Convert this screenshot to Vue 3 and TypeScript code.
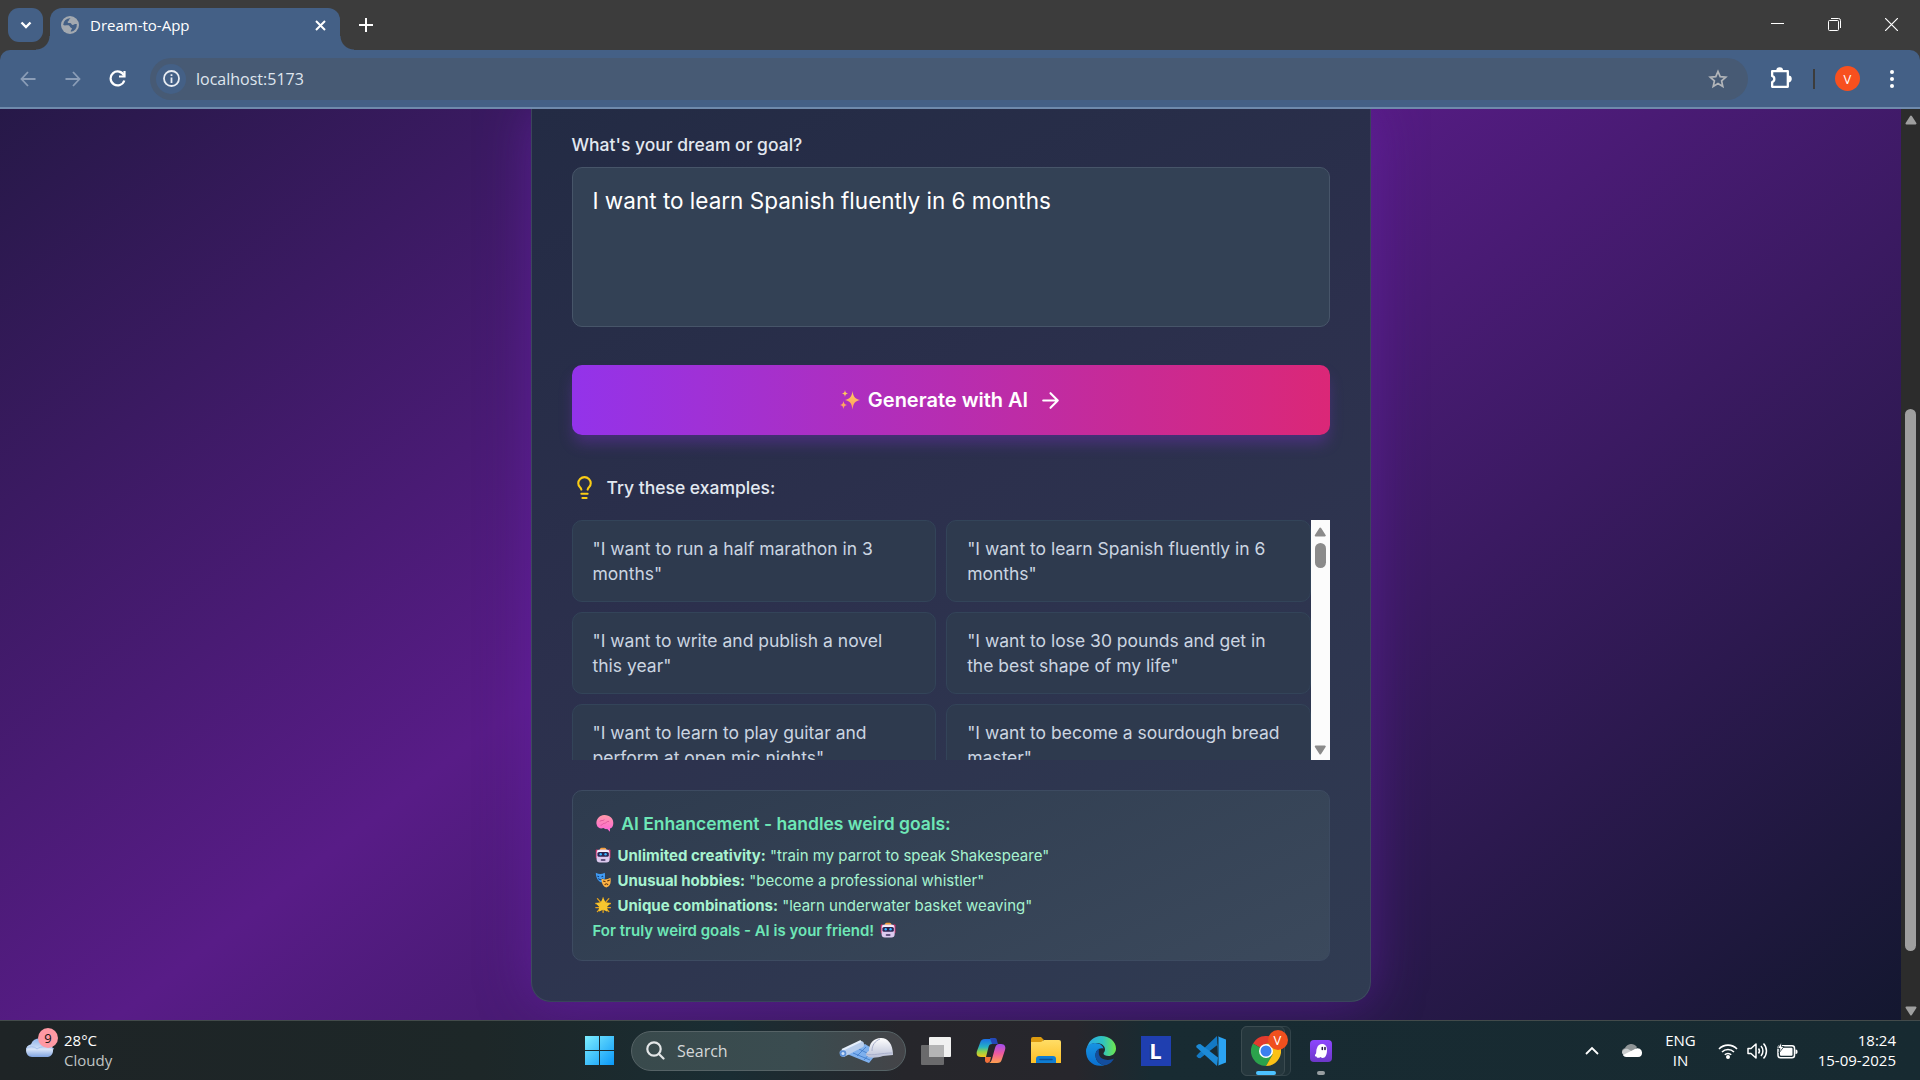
<script setup lang="ts">
import { ref } from 'vue'

interface Highlight {
  icon: 'robot' | 'masks' | 'star'
  label: string
  quote: string
}

const address = ref('localhost:5173')
const search = ref('')
const goal = ref('I want to learn Spanish fluently in 6 months')

const examples: string[] = [
  'I want to run a half marathon in 3 months',
  'I want to learn Spanish fluently in 6 months',
  'I want to write and publish a novel this year',
  'I want to lose 30 pounds and get in the best shape of my life',
  'I want to learn to play guitar and perform at open mic nights',
  'I want to become a sourdough bread master',
]

const highlights: Highlight[] = [
  { icon: 'robot', label: 'Unlimited creativity:', quote: '"train my parrot to speak Shakespeare"' },
  { icon: 'masks', label: 'Unusual hobbies:', quote: '"become a professional whistler"' },
  { icon: 'star', label: 'Unique combinations:', quote: '"learn underwater basket weaving"' },
]

function pick(example: string): void {
  goal.value = example
}
</script>

<template>
  <div class="desktop">
    <svg class="defs" width="0" height="0" aria-hidden="true">
      <defs>
        <linearGradient id="gSpark" x1="0" y1="0" x2="0" y2="1"><stop offset="0" stop-color="#ffd35c" /><stop offset="1" stop-color="#ff9a62" /></linearGradient>
        <linearGradient id="gBrain" x1="0" y1="0" x2="0" y2="1"><stop offset="0" stop-color="#ff9aa8" /><stop offset="1" stop-color="#ff62d8" /></linearGradient>
        <linearGradient id="gWin" x1="0" y1="0" x2="1" y2="1"><stop offset="0" stop-color="#7deeff" /><stop offset="1" stop-color="#0a98f8" /></linearGradient>
        <linearGradient id="gCopA" x1="0" y1="0" x2="0" y2="1"><stop offset="0" stop-color="#1a6fe8" /><stop offset=".45" stop-color="#27b2c4" /><stop offset=".7" stop-color="#8fd24a" /><stop offset="1" stop-color="#f6c51c" /></linearGradient>
        <linearGradient id="gCopB" x1="0" y1="0" x2="0" y2="1"><stop offset="0" stop-color="#a04df0" /><stop offset=".5" stop-color="#ee5a9e" /><stop offset="1" stop-color="#ffa04e" /></linearGradient>
        <linearGradient id="gFold" x1="0" y1="0" x2="0" y2="1"><stop offset="0" stop-color="#ffdd66" /><stop offset="1" stop-color="#fdbf25" /></linearGradient>
        <linearGradient id="gEdge" x1="0" y1="0" x2="1" y2="0"><stop offset="0" stop-color="#2aa8e8" /><stop offset=".55" stop-color="#2fc3c0" /><stop offset="1" stop-color="#6fe84a" /></linearGradient>
        <linearGradient id="gEdgeB" x1="0" y1="0" x2="0" y2="1"><stop offset="0" stop-color="#1794e2" /><stop offset="1" stop-color="#0a6fd0" /></linearGradient>
        <linearGradient id="gCloud" x1="0" y1="0" x2="0" y2="1"><stop offset="0" stop-color="#8fb4ea" /><stop offset=".6" stop-color="#d6e3f8" /><stop offset="1" stop-color="#7fa3e0" /></linearGradient>
        <linearGradient id="gGhost" x1="0" y1="0" x2="0" y2="1"><stop offset="0" stop-color="#8d46ff" /><stop offset="1" stop-color="#6c38c8" /></linearGradient>
        <linearGradient id="gHelmet" x1="0" y1="0" x2="0" y2="1"><stop offset="0" stop-color="#ffffff" /><stop offset="1" stop-color="#b9bfd6" /></linearGradient>
        <symbol id="robot" viewBox="0 0 20 20">
          <rect x="1" y="3" width="3" height="11" rx="1" fill="#d6336c" /><rect x="16" y="3" width="3" height="11" rx="1" fill="#d6336c" />
          <rect x="6" y="1" width="8" height="4" rx="2" fill="#f59f3a" />
          <rect x="2" y="3" width="16" height="16" rx="4" fill="#dcc9ee" /><rect x="3" y="4" width="14" height="3" rx="1" fill="#f7effc" />
          <rect x="3" y="6" width="14" height="6" rx="2" fill="#2b2450" /><circle cx="7" cy="9" r="1.5" fill="#35b6ff" /><circle cx="13" cy="9" r="1.5" fill="#35b6ff" />
          <rect x="7" y="15" width="6" height="2" rx="1" fill="#3a2d5c" />
        </symbol>
        <symbol id="masks" viewBox="0 0 20 20">
          <path d="M1 1c4 2 7 2 11 0 1 6 0 11-4 12C4 12 1 7 1 1z" fill="#3f9bf5" /><path d="M3 5l2 1M8 6l2-1M4 8c2 2 4 2 6 0" stroke="#123a72" stroke-width="1.3" fill="none" />
          <path d="M8 8c4 2 7 1 11-1 1 6 0 11-5 12-4-1-6-5-6-11z" fill="#fdb244" /><path d="M10 11l3 1M15 11l3-1M12 16c1-2 3-2 4 0" stroke="#5f3512" stroke-width="1.4" fill="none" />
        </symbol>
        <symbol id="star" viewBox="0 0 20 20">
          <path d="M10 1v18M1 8h18M3 2l14 16M17 2L3 18M1 13h18" stroke="#e5a21c" stroke-width="1.6" stroke-linecap="round" />
          <path d="M10 3l2.300 4.500 5 .8-3.600 3.500.8 5-4.500-2.300-4.500 2.300.8-5L2.700 8.300l5-.8z" fill="#f7c62f" stroke="#f7c62f" stroke-width="2" stroke-linejoin="round" />
        </symbol>
      </defs>
    </svg>

    <header class="tabs">
      <button class="tab-search" aria-label="Search tabs">
        <svg width="14" height="14" viewBox="0 0 14 14" fill="none" stroke="#fff" stroke-width="2.400"><path d="M2.500 4.500L7 9l4.500-4.500" /></svg>
      </button>
      <div class="tab">
        <svg width="18" height="18" viewBox="0 0 18 18"><circle cx="9" cy="9" r="9" fill="#a3a9b0" /><path d="M9.500 2.200c-1 1.300-1.700 1-1.700 2.300 0 .9-1.200.6-1.200 1.600 0 1 .9 1 2.400 1 1.600 0 1.300 2 2.800 2 1.400 0 1.200-1 2.200-1h1.800a6.800 6.800 0 0 1-6 7.600c0-1.600.2-1.600 1-2.500.6-.8-.2-1.300-1.200-1.800-.9-.4-.7-1.800-2.100-2.100-1.500-.3-2.500-.1-3.500.2L2.200 9a6.800 6.800 0 0 1 7.300-6.800z" fill="#446086" /></svg>
        <span class="tab-title">Dream-to-App</span>
        <button class="ghost" aria-label="Close tab">
          <svg width="11" height="11" viewBox="0 0 11 11" stroke="#fff" stroke-width="2"><path d="M1 1l9 9M10 1l-9 9" /></svg>
        </button>
      </div>
      <button class="new-tab" aria-label="New tab">
        <svg width="14" height="14" viewBox="0 0 14 14" stroke="#fff" stroke-width="2"><path d="M7 0v14M0 7h14" /></svg>
      </button>
      <div class="window-buttons">
        <button aria-label="Minimize"><svg width="13" height="13" viewBox="0 0 13 13" stroke="#fff"><path d="M0 5.500h13" /></svg></button>
        <button aria-label="Restore"><svg width="13" height="13" viewBox="0 0 13 13" fill="none" stroke="#fff"><rect x=".5" y="2.500" width="10" height="10" rx="1" /><path d="M3 .5h7.500a2 2 0 0 1 2 2V10" /></svg></button>
        <button aria-label="Close"><svg width="13" height="13" viewBox="0 0 13 13" stroke="#fff" stroke-width="1.200"><path d="M0 0l13 13M13 0L0 13" /></svg></button>
      </div>
    </header>

    <div class="chrome-back">
      <nav class="toolbar" aria-label="Browser toolbar">
        <button class="tool" aria-label="Back"><svg width="16" height="16" viewBox="0 0 16 16" fill="none" stroke="#8b9db7" stroke-width="1.800"><path d="M15.500 8H1.500M8 1L1.500 8 8 15" /></svg></button>
        <button class="tool" aria-label="Forward"><svg width="16" height="16" viewBox="0 0 16 16" fill="none" stroke="#8b9db7" stroke-width="1.800"><path d="M.5 8h14M8 1l6.500 7L8 15" /></svg></button>
        <button class="tool" aria-label="Reload"><svg width="17" height="17" viewBox="0 0 17 17" fill="none" stroke="#fff" stroke-width="2.200"><path d="M15 5.500A7 7 0 1 0 15.300 10.500" /><path d="M15.500 1v5.500H10" /></svg></button>
        <div class="omnibox">
          <button class="site-info" aria-label="Site information"><svg width="17" height="17" viewBox="0 0 17 17" fill="none" stroke="#e8ecf2" stroke-width="1.800"><circle cx="8.500" cy="8.500" r="7.500" /><path d="M8.500 7.500V13M8.500 4.200V6" /></svg></button>
          <input v-model="address" class="address" type="text" aria-label="Address" />
          <button class="ghost" aria-label="Bookmark"><svg width="20" height="20" viewBox="0 0 20 20" fill="none" stroke="#b2b5b9" stroke-width="1.700"><path d="M10 2.500l2.200 5.200 5.600.5-4.200 3.700 1.200 5.500L10 14.500l-4.800 2.900 1.200-5.500L2.200 8.200l5.600-.5z" /></svg></button>
        </div>
        <button class="tool ext" aria-label="Extensions"><svg width="23" height="23" viewBox="0 0 22 22" fill="none" stroke="#fff" stroke-width="2.200" stroke-linejoin="round"><path d="M3 4h15v15H3v-4.500a3.200 3.200 0 0 0 0-6z" /><path d="M8 3.500a2.200 2.200 0 0 1 4.400 0zM18.500 9.300a2.200 2.200 0 0 1 0 4.400z" fill="#fff" /></svg></button>
        <span class="divider"></span>
        <button class="profile" aria-label="Profile">V</button>
        <button class="tool menu" aria-label="Menu"><svg width="6" height="20" viewBox="0 0 6 20" fill="#fff"><circle cx="3" cy="3" r="2" /><circle cx="3" cy="10" r="2" /><circle cx="3" cy="17" r="2" /></svg></button>
      </nav>
    </div>

    <div class="viewport">
      <main class="page">
        <section class="card">
          <label class="label" for="goal">What's your dream or goal?</label>
          <textarea id="goal" v-model="goal" class="goal" spellcheck="false"></textarea>

          <button class="generate">
            <svg class="emoji" width="16" height="16" viewBox="0 0 20 20" fill="url(#gSpark)" aria-hidden="true"><path d="M12.500 1c.8 5.500 2 7.500 7.500 9-5.500 1.500-6.700 3.500-7.500 9.500-.8-6-2-8-7.500-9.500 5.500-1.500 6.700-3.500 7.500-9zM5 0c.4 2.200.8 3 3 3.500C5.800 4 5.400 4.800 5 7c-.4-2.200-.8-3-3-3.500C4.200 3 4.600 2.200 5 0zM3.500 11c.4 2.400 1 3.400 3.500 4-2.500.6-3.100 1.600-3.500 4-.4-2.400-1-3.400-3.500-4 2.500-.6 3.100-1.600 3.500-4z" /></svg>
            <span>Generate with AI</span>
            <svg class="arrow" width="20" height="20" viewBox="0 0 24 24" fill="none" stroke="currentColor" stroke-width="2" stroke-linecap="round" stroke-linejoin="round" aria-hidden="true"><path d="M5 12h14M12 5l7 7-7 7" /></svg>
          </button>

          <h3 class="try">
            <svg width="20" height="20" viewBox="0 0 24 24" fill="none" stroke="#facc15" stroke-width="2" stroke-linecap="round" stroke-linejoin="round" aria-hidden="true"><path d="M15 14c.2-1 .7-1.700 1.500-2.500 1-.9 1.500-2.200 1.500-3.500A6 6 0 0 0 6 8c0 1 .2 2.200 1.500 3.500.7.7 1.300 1.500 1.500 2.500M9 18h6M10 22h4" /></svg>
            <span>Try these examples:</span>
          </h3>

          <div class="scroller">
            <div class="examples">
              <button v-for="example in examples" :key="example" class="example" @click="pick(example)">"{{ example }}"</button>
            </div>
            <div class="bar bar-light" aria-hidden="true">
              <svg width="10" height="8" viewBox="0 0 12 10"><path d="M6 1.500L10.500 8.500h-9z" fill="#8b8b8b" stroke="#8b8b8b" stroke-width="2" stroke-linejoin="round" /></svg>
              <div class="track"><i class="thumb thumb-small"></i></div>
              <svg width="10" height="8" viewBox="0 0 12 10"><path d="M6 8.500L10.500 1.500h-9z" fill="#8b8b8b" stroke="#8b8b8b" stroke-width="2" stroke-linejoin="round" /></svg>
            </div>
          </div>

          <aside class="info">
            <h4 class="info-title">
              <svg class="emoji" width="15" height="15" viewBox="0 0 20 20" aria-hidden="true"><path d="M2 12C0 7 4 1 10 1s10 4 9.500 9.500c-.2 3-1.500 4.500-3.500 5V19l-3-3c-2 .5-3-.5-4-1-3 1-6 0-7-3z" fill="url(#gBrain)" /><path d="M5 8c2-2 3 0 5-2M10 10c2 0 3-3 5-2M6 12c2 0 2-2 4-2" stroke="#e0569d" stroke-width="1" fill="none" /></svg>
              <span>AI Enhancement - handles weird goals:</span>
            </h4>
            <p v-for="item in highlights" :key="item.label" class="info-line">
              <svg class="emoji" width="13" height="13" aria-hidden="true"><use :href="'#' + item.icon" /></svg>
              <span><strong>{{ item.label }}</strong> {{ item.quote }}</span>
            </p>
            <p class="info-line closing">
              <span>For truly weird goals - AI is your friend!</span>
              <svg width="13" height="13" aria-hidden="true"><use href="#robot" /></svg>
            </p>
          </aside>
        </section>
      </main>
      <div class="bar bar-dark" aria-hidden="true">
        <svg width="12" height="10" viewBox="0 0 12 10"><path d="M6 1.500L10.500 8.500h-9z" fill="#9f9f9f" stroke="#9f9f9f" stroke-width="2" stroke-linejoin="round" /></svg>
        <div class="track"><i class="before"></i><i class="thumb thumb-large"></i><i class="after"></i></div>
        <svg width="12" height="10" viewBox="0 0 12 10"><path d="M6 8.500L10.500 1.500h-9z" fill="#9f9f9f" stroke="#9f9f9f" stroke-width="2" stroke-linejoin="round" /></svg>
      </div>
    </div>

    <footer class="taskbar">
      <button class="weather" aria-label="Weather">
        <span class="weather-icon">
          <svg width="30" height="22" viewBox="0 0 30 22"><path d="M7 21a6.500 6.500 0 0 1-1-12.800A9.500 9.500 0 0 1 23.500 8 6.800 6.800 0 0 1 23 21z" fill="url(#gCloud)" /><path d="M1 13c3-3 8-3 11 0 4-3 10-3 17 0" stroke="#a7c2ee" fill="none" /></svg>
          <b class="badge">9</b>
        </span>
        <span class="weather-text"><span>28°C</span><span class="dim">Cloudy</span></span>
      </button>

      <div class="apps">
        <button class="app" aria-label="Start"><svg width="30" height="30" viewBox="0 0 30 30" fill="url(#gWin)"><path d="M0 0h14v14H0zM15 0h14v14H15zM0 15h14v14H0zM15 15h14v14H15z" /></svg></button>
        <div class="search">
          <svg width="19" height="19" viewBox="0 0 19 19" fill="none" stroke="#e3e6e7" stroke-width="2.200" stroke-linecap="round"><circle cx="8" cy="8" r="6.700" /><path d="M13 13l4.500 4.500" /></svg>
          <input v-model="search" type="search" placeholder="Search" aria-label="Search" />
          <svg width="54" height="26" viewBox="0 0 54 26"><path d="M8 16L26 6l13 8-9 11z" fill="#7eb0ee" /><path d="M14 15l17 7M20 11l14 7M27 9l-9 9M34 12l-9 10" stroke="#3c78c8" stroke-width=".8" /><path d="M1 13L22 3c3 0 4 4 2 6L5 19c-3 0-5-3-4-6z" fill="#b7cdec" /><path d="M3 12L22 3" stroke="#e4eefb" stroke-width="2" /><circle cx="4" cy="15.500" r="3.300" fill="#5b8fd6" /><circle cx="4" cy="15.500" r="1.500" fill="#cfe0f7" /><path d="M30 13C30 5 35 0 42 0s12 6 12 17l-10 1c-6 2-14 3-17-1 0-2 1-3 3-4z" fill="url(#gHelmet)" /><path d="M33 13c0-6 3-10 8-12M27 16c6 2 16-1 26-1" stroke="#a9b0cc" fill="none" /></svg>
        </div>
        <button class="app" aria-label="Task view"><svg width="30" height="28" viewBox="0 0 30 28"><rect y="8" width="23" height="20" rx="1" fill="#6a6a6c" /><rect x="8" width="22" height="20" rx="1" fill="#f1f1f1" /><path d="M8 8h15v12H8z" fill="#b4b4b5" /></svg></button>
        <button class="app" aria-label="Copilot"><svg width="30" height="28" viewBox="0 0 30 28"><path d="M9 2h9c2 0 2 2 3 5h-5c-2 0-3 1-3.500 3L10 20H5c-4 0-5-3-4-6L4 6c1-3 2-4 5-4z" fill="url(#gCopA)" /><path d="M14 1h5c2 0 2 3 3 6h-6z" fill="#2448b8" /><path d="M21 26h-9c2 0 3-1 4-4l3-11c1-3 2-4 4-4h2c4 0 5 3 4 6l-3 9c-1 3-2 4-5 4z" fill="url(#gCopB)" /><path d="M9 20h6l-1 4c-1 2-4 3-5 0z" fill="#f2703a" /></svg></button>
        <button class="app" aria-label="File Explorer"><svg width="30" height="27" viewBox="0 0 30 27"><path d="M0 2a2 2 0 0 1 2-2h8l3 3h-1v5H0z" fill="#dc9b10" /><path d="M0 5h10l3-2h15a2 2 0 0 1 2 2v21H0z" fill="url(#gFold)" /><path d="M5 26v-4a3 3 0 0 1 3-3h14a3 3 0 0 1 3 3v4z" fill="#0f7dd3" /><path d="M9 22.500h12" stroke="#0b4f96" stroke-width="1.500" stroke-linecap="round" /></svg></button>
        <button class="app" aria-label="Edge"><svg width="30" height="30" viewBox="0 0 30 30"><path d="M1 12A14.500 14.500 0 0 1 15 0c9 0 15 6 15 12.500 0 5-4 7.500-7.500 7.500-3 0-5-1-5-2.500 0-1 1.500-1.500 1.500-4 0-4-4-6.500-8.500-6.500C6 7 2.500 9 1 12z" fill="url(#gEdge)" /><path d="M0 15c0-5 4-8 9-8s8 3 8.500 5.500C13 11 9 15 9.500 20c.4 5 4 8.500 9 9.200C8 32 0 25 0 15z" fill="url(#gEdgeB)" /><path d="M13 12.500c-3 2-4 5-3.500 8 .8 5 6 9.500 11 8.500 3-1 6-3 7.500-6.500-6 3-14 1-15-4-.4-2 0-4.500 0-6z" fill="#134e9e" /></svg></button>
        <button class="app" aria-label="L"><span class="letter">L</span></button>
        <button class="app" aria-label="Visual Studio Code"><svg width="30" height="30" viewBox="0 0 30 30"><path d="M21 0L2.500 17.500.3 20l2 2 2 .2L22 8.500V21z" fill="#1379c4" /><path d="M2.300 8.200L.3 9.700v1.500L21 30l1-8.500L4.300 8z" fill="#1c8ad6" /><path d="M21 0l9 3.500v23L21 30c1 0 1.500-1 1.500-2V2c0-1-.5-2-1.500-2z" fill="#2ba3f2" /></svg></button>
        <button class="app" aria-label="Chrome">
          <span class="tile stacked">
            <svg width="30" height="30" viewBox="0 0 30 30"><path d="M15 15L2 7.500A15 15 0 0 1 28 7.500H15z" fill="#e33b2e" /><path d="M15 15l6.500 3.700L15 30A15 15 0 0 1 2 7.500z" fill="#2ba24c" /><path d="M15 7.500h13A15 15 0 0 1 15 30l6.500-11.300z" fill="#fbc116" /><circle cx="15" cy="15" r="7" fill="#fff" /><circle cx="15" cy="15" r="5.500" fill="#3b7ff0" /></svg>
            <b class="badge profile-badge">V</b>
            <i class="active-line"></i>
          </span>
        </button>
        <button class="app" aria-label="Kiro">
          <span class="tile plain">
            <svg width="22" height="22" viewBox="0 0 22 22"><rect width="22" height="22" rx="4" fill="url(#gGhost)" /><path d="M6.500 16.500C4.500 17 4.500 15 6 13.500 6.500 12 6 10 7 8c1-3 2.800-4 5-4 3.500 0 5 2.500 5 6 0 4.500-1.500 8-4.500 8-1.200 0-1.500-.8-2-1-1.500 1.200-4 1.200-4-.5z" fill="#fff" /><path d="M12.300 7.500v2M15 7.500v2" stroke="#2a1a4a" stroke-width="1.600" stroke-linecap="round" /></svg>
            <i class="idle-line"></i>
          </span>
        </button>
      </div>

      <div class="tray">
        <button aria-label="Hidden icons"><svg width="14" height="9" viewBox="0 0 14 9" fill="none" stroke="#fff" stroke-width="1.800"><path d="M1 8l6-6 6 6" /></svg></button>
        <button class="onedrive" aria-label="OneDrive"><svg width="20" height="13" viewBox="0 0 20 13"><path d="M0 9a4 4 0 0 1 3-5 7 7 0 0 1 12-1l-5 7z" fill="#8f9496" /><path d="M0 9c0-3 3-5 6-4l8 5-12 2z" fill="#c9cccd" /><path d="M4 13a4 4 0 0 1-3-2l12-6a4.500 4.500 0 0 1 7 4c0 2-1 4-4 4z" fill="#fff" /></svg></button>
        <button class="lang"><span>ENG</span><span>IN</span></button>
        <button class="quick" aria-label="Network, volume and battery">
          <svg width="20" height="16" viewBox="0 0 20 16" fill="none" stroke="#fff" stroke-width="1.600"><path d="M1 6a12.500 12.500 0 0 1 18 0M4 9a8.500 8.500 0 0 1 12 0M6.800 11.800a4.500 4.500 0 0 1 6.400 0" /><circle cx="10" cy="14" r="1.200" fill="#fff" /></svg>
          <svg width="21" height="18" viewBox="0 0 21 18" fill="none" stroke="#fff" stroke-width="1.500"><path d="M1 6.500h3L9 2v14l-5-4.500H1z" stroke-linejoin="round" /><path d="M11.500 6.500a4 4 0 0 1 0 5M14 4a7.500 7.500 0 0 1 0 10M16.500 1.500a11 11 0 0 1 0 15" /></svg>
          <svg width="21" height="17" viewBox="0 0 21 17"><rect x="1" y="3.700" width="16.500" height="12" rx="2.500" fill="none" stroke="#fff" stroke-width="1.500" /><rect x="3" y="5.700" width="12.500" height="8" rx="1" fill="#fff" /><path d="M18.500 7.500v4.500c2 0 2-1 2-2.200s0-2.300-2-2.300z" fill="#fff" /><path d="M4.500 0L.5 6.500H3L2 11l5-6.500H4.500z" fill="#fff" stroke="#182b31" stroke-width=".8" /></svg>
        </button>
        <button class="clock"><span>18:24</span><span>15-09-2025</span></button>
      </div>
    </footer>
  </div>
</template>

<style scoped>
* { box-sizing: border-box; }
button { border: 0; padding: 0; margin: 0; background: none; color: inherit; font: inherit; }
svg { display: block; flex: none; }
h3, h4, p { margin: 0; }
.defs { position: absolute; }

.desktop {
  display: flex;
  flex-direction: column;
  height: 100vh;
  overflow: hidden;
  font-family: "Open Sans", "Noto Sans", sans-serif;
  font-size: 15px;
  color: #fff;
}

.tabs { flex: none; display: flex; height: 50px; padding-left: 8px; background: #3c3c3c; }
.tab-search { display: grid; place-items: center; width: 35px; height: 34px; margin: 8px 7px 0 0; border-radius: 11px; background: #446086; }
.tab { position: relative; display: flex; align-items: center; gap: 11px; width: 290px; height: 42px; margin-top: 8px; padding: 0 14px 8px 11px; border-radius: 12px 12px 0 0; background: #446086; }
.tab::before, .tab::after { content: ""; position: absolute; bottom: 0; width: 14px; height: 14px; }
.tab::before { right: 100%; background: radial-gradient(circle at 0 0, transparent 13px, #446086 14px); }
.tab::after { left: 100%; background: radial-gradient(circle at 100% 0, transparent 13px, #446086 14px); }
.tab-title { flex: 1; }
.new-tab { display: grid; place-items: center; width: 52px; height: 50px; }
.window-buttons { display: flex; margin-left: auto; }
.window-buttons button { display: grid; place-items: center; width: 57px; height: 48px; }

.chrome-back { flex: none; background: #3c3c3c; }
.toolbar { display: flex; align-items: center; height: 59px; padding: 0 6px 0 5px; border-bottom: 2px solid #6f8aac; border-radius: 10px 10px 0 0; background: #446086; }
.tool { display: grid; place-items: center; width: 45px; height: 42px; }
.omnibox { flex: 1; display: flex; align-items: center; height: 42px; margin-left: 10px; padding: 0 20px 0 6px; border-radius: 21px; background: #475a74; }
.site-info { display: grid; place-items: center; width: 30px; height: 30px; border-radius: 15px; background: #446086; }
.address { flex: 1; min-width: 0; height: 30px; margin-left: 10px; padding: 0; border: 0; outline: 0; background: none; color: #dfe5ee; font: 16px "Open Sans", "Noto Sans", sans-serif; }
.ext { margin-left: 10px; }
.divider { width: 2px; height: 20px; margin: 0 20px 0 10px; background: #3c3c3c; }
.profile { width: 25px; height: 25px; border-radius: 13px; background: #f8501e; font-size: 13px; }
.menu { margin-left: 9px; }

.viewport { flex: 1; min-height: 0; display: flex; overflow: hidden; }
.page {
  flex: 1;
  min-width: 0;
  overflow: hidden;
  background: linear-gradient(to bottom right, #0f172a, #581c87, #0f172a) 0 -472px / 100% 1470px;
  font-family: Inter, sans-serif;
}
.card {
  zoom: 1.25;
  max-width: 672px;
  margin: 0 auto;
  padding: 18px 32px 32px;
  border: 1px solid rgba(71, 85, 105, .6);
  border-top: 0;
  border-radius: 0 0 16px 16px;
  background: linear-gradient(155deg, #232b44, #2c304d 45%, #303c52);
  box-shadow: 0 0 40px rgba(109, 34, 180, .5);
  font-size: 14px;
  line-height: 20px;
}
.label { display: block; margin-bottom: 8px; color: #e2e8f0; font-weight: 500; }
.goal { display: block; width: 100%; height: 128px; padding: 12px 16px; border: 1px solid #475569; border-radius: 8px; outline: 0; resize: none; background: #334155; color: #fff; font: 18px/28px Inter, sans-serif; }
.generate { display: flex; align-items: center; justify-content: center; gap: 6px; width: 100%; height: 56px; margin: 31px 0 32px; border-radius: 8px; background: linear-gradient(to right, #9333ea, #db2777); box-shadow: 0 8px 12px -2px rgba(147, 51, 234, .3); font-size: 16px; font-weight: 600; }
.emoji { margin-left: 2px; }
.arrow { margin-left: 2px; }
.try { display: flex; align-items: center; gap: 8px; margin-bottom: 16px; color: #e2e8f0; font-size: 14px; font-weight: 500; }
.scroller { display: flex; height: 192px; }
.examples { flex: 1; display: grid; grid-template-columns: 1fr 1fr; gap: 8px; align-content: start; overflow: hidden; }
.example { padding: 12px 16px; border: 1px solid #334459; border-radius: 8px; background: #2e3a4e; color: #cbd5e1; text-align: left; }
.info { margin-top: 24px; padding: 16px 16px 14px; border: 1px solid #3d4b61; border-radius: 8px; background: linear-gradient(155deg, #2e3b4e, #3b495c); }
.info-title { display: flex; align-items: center; gap: 6px; margin-bottom: 5px; color: #6ee7b7; font-size: 14px; font-weight: 600; }
.info-line { display: flex; align-items: center; gap: 5px; color: #a7f3d0; font-size: 12px; }
.closing { color: #6ee7b7; font-weight: 600; }

.bar { flex: none; display: flex; flex-direction: column; align-items: center; }
.track { flex: 1; display: flex; flex-direction: column; align-items: center; width: 100%; }
.thumb { border-radius: 6px; }
.bar-light { width: 15px; padding: 5px 0 4px; background: #fcfcfc; }
.bar-light .track { padding-top: 5px; }
.thumb-small { width: 9px; height: 20px; background: #8b8b8b; }
.bar-dark { width: 19px; padding: 6px 0 4px; background: #2c2c2c; }
.bar-dark .track { margin: 8px 0 6px; }
.thumb-large { flex: 542; width: 11px; background: #9f9f9f; }
.before { flex: 276; }
.after { flex: 49; }

.taskbar {
  flex: none;
  display: grid;
  grid-template-columns: 1fr auto 1fr;
  height: 60px;
  border-top: 1px solid #434b4b;
  background: linear-gradient(to right, #1e2426, #1d2728 25%, #1a2d33 38%, #26262b 47%, #27262c 56%, #182b32 60%, #172a31);
  line-height: 20px;
}
.taskbar button { cursor: default; }
.weather { display: flex; align-items: center; gap: 9px; padding-left: 25px; text-align: left; }
.weather-icon { position: relative; margin-bottom: 8px; }
.badge { position: absolute; top: -8px; left: 13px; width: 20px; height: 20px; border-radius: 10px; background: #ff99a4; color: #111; font-size: 13px; font-weight: 400; line-height: 20px; text-align: center; }
.weather-text, .lang, .clock { display: flex; flex-direction: column; justify-content: center; padding-bottom: 2px; }
.dim { color: #c0c4c4; }
.apps { display: flex; align-items: center; }
.app { display: grid; place-items: center; width: 55px; height: 59px; }
.search { display: flex; align-items: center; width: 275px; height: 40px; margin: 0 2px 0 4px; padding: 0 12px 0 14px; border: 1px solid #566366; border-radius: 20px; background: linear-gradient(to right, #394a4c, #3a4c50 60%, #444448); }
.search input { flex: 1; min-width: 0; margin-left: 12px; padding: 0; border: 0; outline: 0; background: none; color: #d4d8d9; font: 16px "Open Sans", "Noto Sans", sans-serif; }
.search input::placeholder { color: #d4d8d9; opacity: 1; }
.letter { width: 30px; height: 30px; background: #1f3fb0; color: #fff; font-size: 22px; font-weight: 700; line-height: 28px; text-shadow: -1px 1px 0 #14276e; }
.tile { position: relative; display: grid; place-items: center; width: 50px; height: 50px; border: 1px solid #33444a; border-radius: 6px; background: #1f3137; }
.stacked::before { content: ""; position: absolute; inset: -1px 5px -1px -1px; border: 1px solid #3b4b50; border-radius: 6px; background: #25373d; }
.tile svg { position: relative; }
.plain { border-color: transparent; background: none; }
.profile-badge { top: 3px; left: 26px; background: #f0501e; color: #fff; font-size: 13px; }
.active-line { position: absolute; bottom: 0; width: 20px; height: 4px; border-radius: 2px; background: #4cc2ff; }
.idle-line { position: absolute; bottom: 0; width: 8px; height: 4px; border-radius: 2px; background: #989fa2; }
.tray { display: flex; align-items: center; justify-content: flex-end; padding-right: 24px; }
.onedrive { margin-left: 23px; }
.lang { align-items: center; margin-left: 23px; }
.quick { display: flex; align-items: center; gap: 9px; margin-left: 22px; }
.clock { align-items: flex-end; margin-left: 20px; }
</style>

<style>
body { margin: 0; background: #3c3c3c; }
</style>
